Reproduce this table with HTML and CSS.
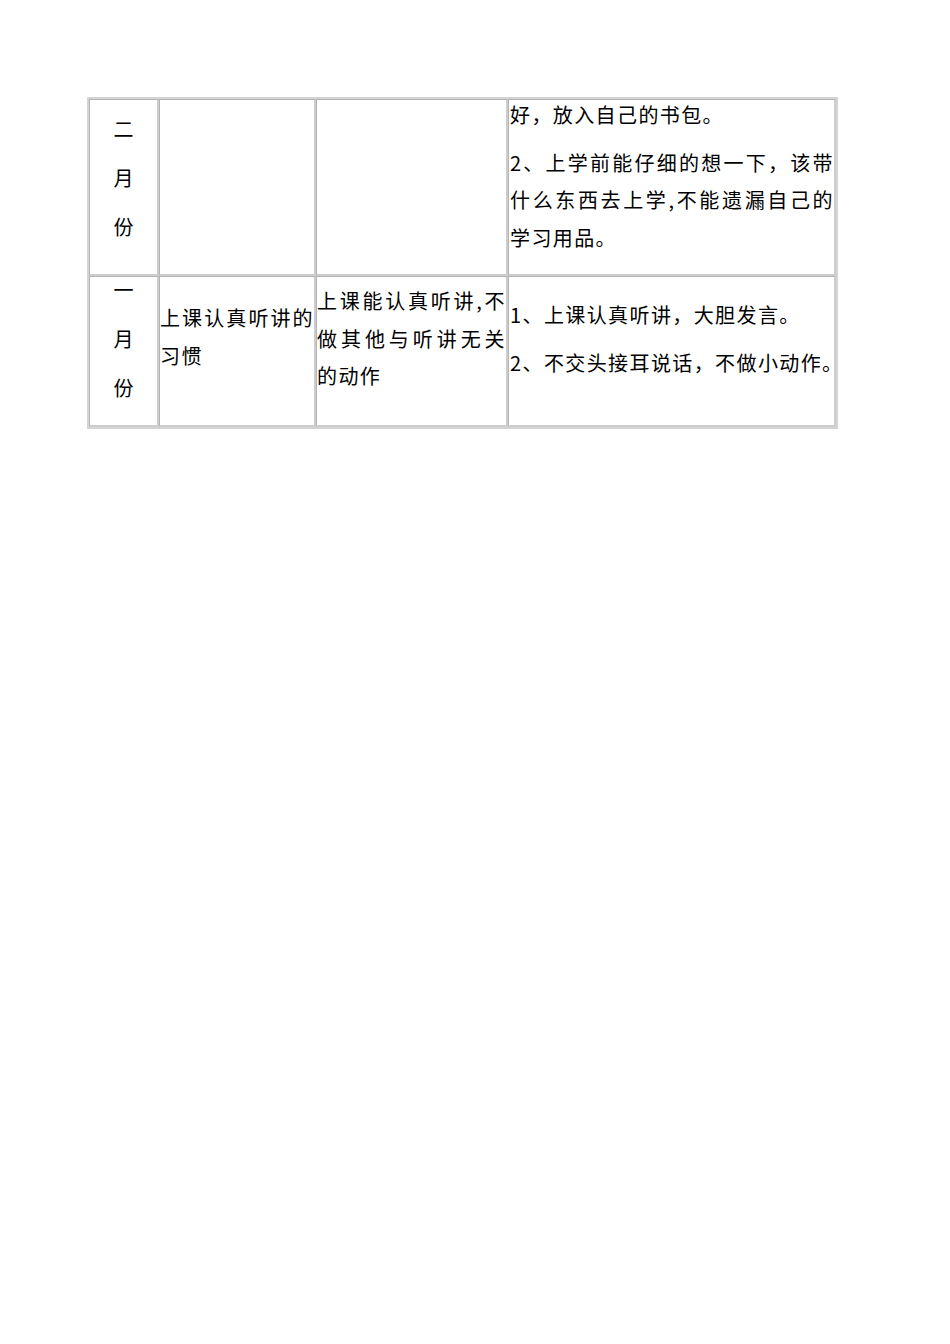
FILE: index.html
```html
<!DOCTYPE html>
<html lang="zh-CN">
<head>
<meta charset="utf-8">
<title>习惯养成表</title>
<link rel="stylesheet" href="styles.css">
</head>
<body>
<div class="sheet">
  <div class="cell month">
    <div class="txt r1-month">
      <span class="ln">二</span>
      <span class="ln">月</span>
      <span class="ln">份</span>
    </div>
  </div>
  <div class="cell"></div>
  <div class="cell"></div>
  <div class="cell wide">
    <div class="txt r1-wide">
      <div class="p"><span class="ln">好，放入自己的书包。</span></div>
      <div class="p">
        <span class="ln jl">2、上学前能仔细的想一下，该带</span>
        <span class="ln jl">什么东西去上学,不能遗漏自己的</span>
        <span class="ln">学习用品。</span>
      </div>
    </div>
  </div>

  <div class="cell month">
    <div class="txt r2-month">
      <span class="ln">一</span>
      <span class="ln">月</span>
      <span class="ln">份</span>
    </div>
  </div>
  <div class="cell">
    <div class="txt r2-habit">
      <span class="ln jl">上课认真听讲的</span>
      <span class="ln">习惯</span>
    </div>
  </div>
  <div class="cell">
    <div class="txt r2-goal">
      <span class="ln jl">上课能认真听讲,不</span>
      <span class="ln jl">做其他与听讲无关</span>
      <span class="ln">的动作</span>
    </div>
  </div>
  <div class="cell wide">
    <div class="txt r2-wide">
      <div class="p"><span class="ln">1、上课认真听讲，大胆发言。</span></div>
      <div class="p"><span class="ln">2、不交头接耳说话，不做小动作。</span></div>
    </div>
  </div>
</div>
</body>
</html>
```

FILE: styles.css
```css
html, body {
  margin: 0;
  padding: 0;
  background: #ffffff;
}

body {
  font-family: "Noto Sans CJK SC", "Liberation Serif", sans-serif;
  color: #000000;
}

.sheet {
  margin: 97px 0 0 87px;
  width: 747px;
  border: 2px solid #d4d4d4;
  display: grid;
  grid-template-columns: 70px 157px 192px 328px;
  grid-template-rows: 177px 151px;
}

.cell {
  box-sizing: border-box;
  border-style: solid;
  border-color: #b4b4b4 #cdcdcd #cdcdcd #b4b4b4;
  border-width: 1px 2px 2px 1px;
  font-size: 20px;
  letter-spacing: 1.4px;
  line-height: 37.7px;
  min-width: 0;
}

.ln {
  display: block;
  white-space: nowrap;
}

.jl {
  text-align: justify;
  text-align-last: justify;
}

.p + .p {
  margin-top: 10px;
}

.month {
  text-align: center;
  letter-spacing: 0;
  line-height: 49px;
}

.wide .txt {
  padding-left: 1px;
}

.r1-month { margin-top: 3.5px; }
.r1-wide  { margin-top: -4px; }
.r2-month { margin-top: -12.5px; }
.r2-habit { margin-top: 22px; }
.r2-goal  { margin-top: 5px; }
.r2-wide  { margin-top: 19px; }
```
